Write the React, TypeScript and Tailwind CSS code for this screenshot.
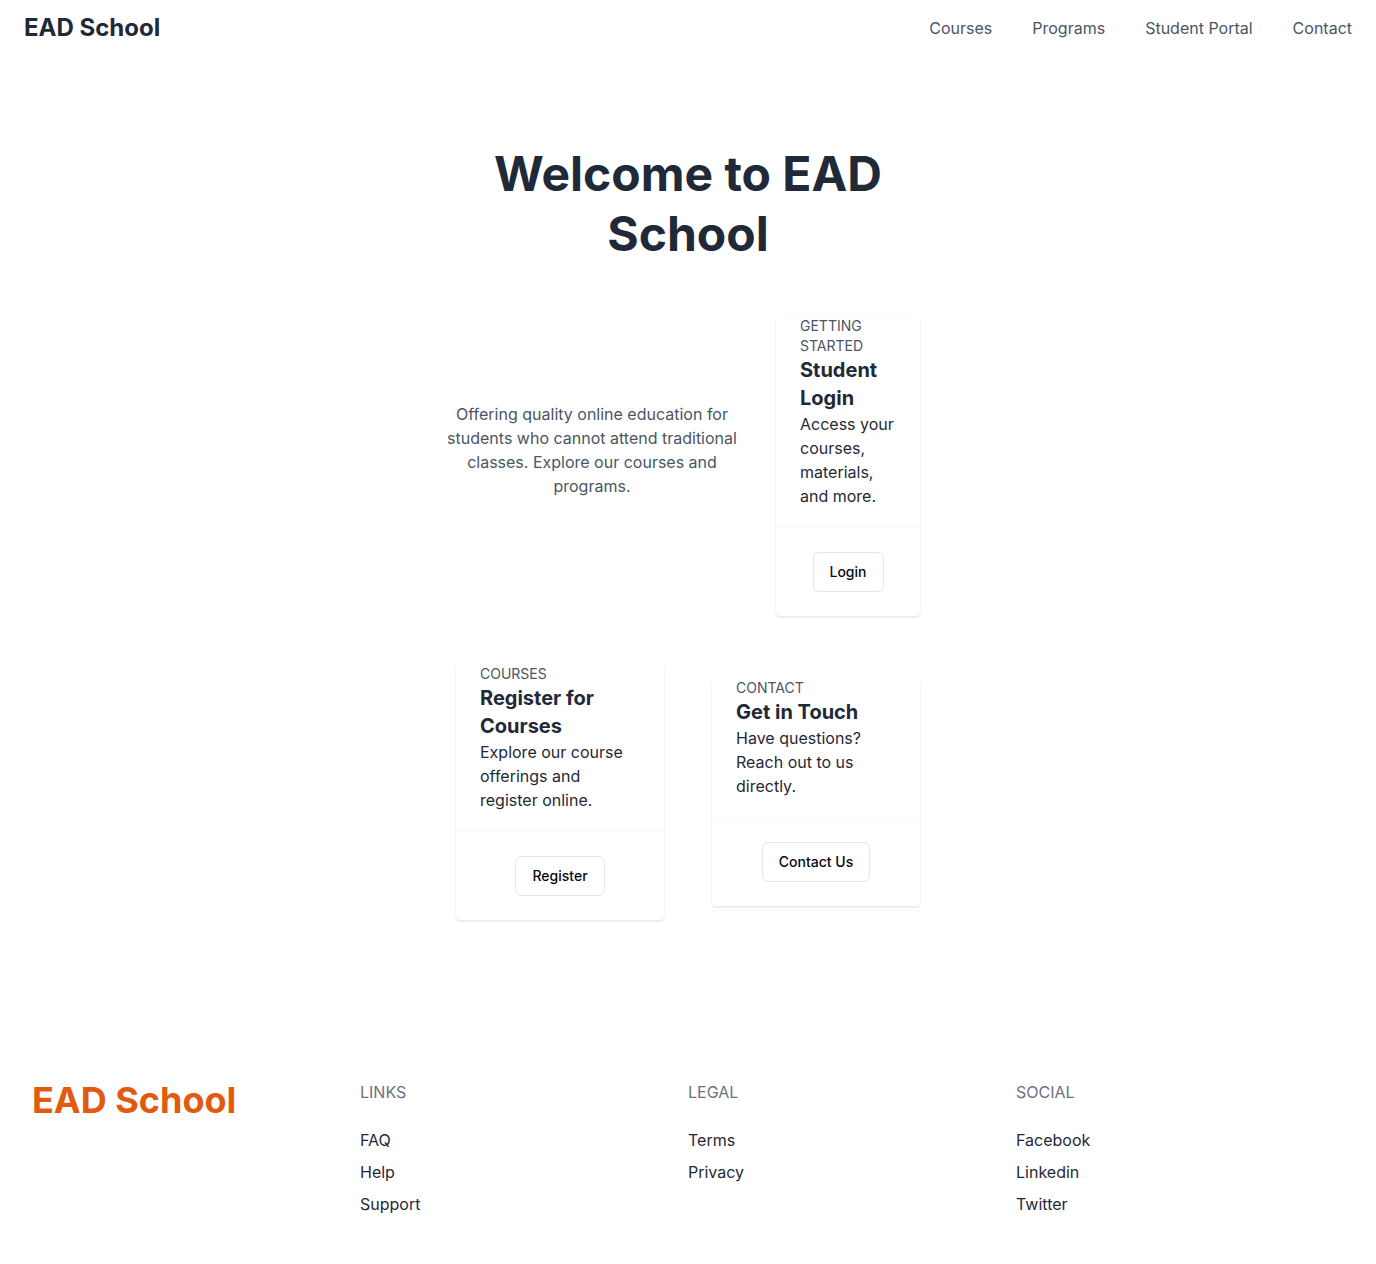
import React from 'react';

type CardProps = { tag: string; title: string; text: string; action: string };

function Card({ tag, title, text, action }: CardProps) {
  return (
    <article className="m-4 min-w-0 flex-1 overflow-hidden rounded-sm bg-white shadow-sm">
      <div className="border-b border-[#f9fafb] px-6 pb-[19px]">
        <p className="text-sm leading-5 text-[#4b5563] uppercase">{tag}</p>
        <h2 className="text-xl font-bold">{title}</h2>
        <p className="text-base">{text}</p>
      </div>
      <div className="flex justify-center py-6">
        <button
          type="button"
          className="h-10 rounded-md border border-[#e5e7eb] bg-white px-4 text-sm font-medium text-[#09090b]"
        >
          {action}
        </button>
      </div>
    </article>
  );
}

function LinkColumn({ title, links }: { title: string; links: string[] }) {
  return (
    <div>
      <h3 className="mb-6 text-base text-[#6b7280] uppercase">{title}</h3>
      <ul className="flex flex-col gap-2">
        {links.map((l) => (
          <li key={l}>
            <a href="#">{l}</a>
          </li>
        ))}
      </ul>
    </div>
  );
}

export default function App() {
  return (
    <div className="min-h-screen bg-white font-[Inter,sans-serif] text-base text-[#1f2937]">
      <header className="flex items-center justify-between px-6 py-3">
        <a href="#" className="text-2xl font-bold">EAD School</a>
        <nav className="flex gap-10 text-[#4b5563]">
          {['Courses', 'Programs', 'Student Portal', 'Contact'].map((l) => (
            <a key={l} href="#">{l}</a>
          ))}
        </nav>
      </header>
      <main className="mx-auto max-w-lg px-2 pt-22">
        <h1 className="px-6 text-center text-5xl leading-[60px] font-bold">Welcome to EAD School</h1>
        <div className="mt-9 flex items-center gap-4">
          <p className="mb-8 w-76 text-center text-[#4b5563]">
            Offering quality online education for students who cannot attend traditional classes. Explore our courses and programs.
          </p>
          <Card tag="Getting Started" title="Student Login" text="Access your courses, materials, and more." action="Login" />
        </div>
        <div className="mt-4 flex items-center gap-4">
          <Card tag="Courses" title="Register for Courses" text="Explore our course offerings and register online." action="Register" />
          <Card tag="Contact" title="Get in Touch" text="Have questions? Reach out to us directly." action="Contact Us" />
        </div>
      </main>
      <footer className="mt-32 grid grid-cols-4 px-8 pt-4 pb-12">
        <a href="#" className="text-4xl font-bold text-[#e25a10]">EAD School</a>
        <LinkColumn title="Links" links={['FAQ', 'Help', 'Support']} />
        <LinkColumn title="Legal" links={['Terms', 'Privacy']} />
        <LinkColumn title="Social" links={['Facebook', 'Linkedin', 'Twitter']} />
      </footer>
    </div>
  );
}
